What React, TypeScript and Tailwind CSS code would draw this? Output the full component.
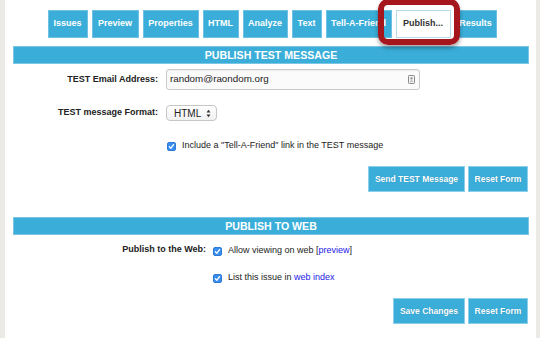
import React from 'react';

const tabs = [
  { label: 'Issues', w: 'w-[40px]' },
  { label: 'Preview', w: 'w-[47px]' },
  { label: 'Properties', w: 'w-[56px]' },
  { label: 'HTML', w: 'w-[36px]' },
  { label: 'Analyze', w: 'w-[45px]' },
  { label: 'Text', w: 'w-[30px]' },
  { label: 'Tell-A-Friend', w: 'w-[66px]' },
  { label: 'Publish...', w: 'w-[55px]', active: true },
  { label: 'Results', w: 'w-[42px]' },
];

function Check() {
  return (
    <span className="w-[9px] h-[9px] rounded-[2px] bg-[#3a8ef0] border border-[#2f7ad6] flex items-center justify-center shrink-0">
      <svg width="7" height="7" viewBox="0 0 7 7" fill="none">
        <path d="M1.4 3.7 L2.9 5.2 L5.6 1.6" stroke="white" strokeWidth="1.3" strokeLinecap="round" strokeLinejoin="round" />
      </svg>
    </span>
  );
}

function Button({ label, w }: { label: string; w: string }) {
  return (
    <button className={`${w} h-[26px] bg-[#3aaed9] border border-[#8ccfea] text-white font-bold text-[8.5px] flex items-center justify-center [text-shadow:0_0_1px_rgba(0,60,90,0.35)]`}>
      {label}
    </button>
  );
}

function SectionHeader({ title }: { title: string }) {
  return (
    <div className="h-[18px] bg-[#3aaed9] border border-[#7cc6e5] flex items-center justify-center text-white font-bold text-[10.6px] leading-none">
      {title}
    </div>
  );
}

export default function App() {
  return (
    <div className="w-[540px] h-[338px] bg-[#ebeae5] flex overflow-hidden font-['Liberation_Sans',Arial,sans-serif] text-[#222]">
      <div className="ml-[5px] w-[531px] h-full bg-white relative pl-[8px] pr-[7px]">
        {/* tab row */}
        <div className="pt-[10px] flex justify-center gap-[4px] pl-[2px]">
          {tabs.map((tab) => (
            <div
              key={tab.label}
              className={`${tab.w} h-[28px] flex items-center justify-center font-bold text-[9px] whitespace-nowrap overflow-hidden ${
                tab.active ? 'bg-white border border-[#b9dcec] text-[#333]' : 'bg-[#3aaed9] border border-[#6fc1e3] text-white'
              }`}
            >
              {tab.label}
            </div>
          ))}
        </div>

        {/* red highlight box */}
        <div className="absolute left-[373px] top-[-1px] w-[82px] h-[46px] rounded-[10px] border-[6px] border-[#a5161d] shadow-[0_3px_4px_rgba(0,0,0,0.35)]" />

        <div className="mt-[8px]">
          <SectionHeader title="PUBLISH TEST MESSAGE" />
        </div>

        <div className="grid grid-cols-[145px_1fr] gap-x-[8px] mt-[5px] text-[9px]">
          <div className="h-[21px] flex items-center justify-end font-bold">TEST Email Address:</div>
          <div className="w-[254px] h-[21px] border border-[#c9c9c9] rounded-[3px] bg-[#fbfbfb] shadow-[inset_0_1px_1px_rgba(0,0,0,0.06)] flex items-center pl-[3px] pr-[4px]">
            <span className="text-[9.8px] flex-1">random@raondom.org</span>
            <svg width="7" height="9" viewBox="0 0 7 9">
              <rect x="0.5" y="0.5" width="6" height="8" rx="0.8" fill="#f2f2f2" stroke="#8a8a8a" />
              <circle cx="3.5" cy="3.4" r="1.1" fill="#8a8a8a" />
              <path d="M1.8 6.6 Q3.5 4.6 5.2 6.6 Z" fill="#8a8a8a" />
            </svg>
          </div>

          <div className="mt-[15px] h-[16px] flex items-center justify-end font-bold">TEST message Format:</div>
          <div className="mt-[15px] w-[51px] h-[16px] border border-[#c6c6c6] rounded-[4px] bg-gradient-to-b from-white to-[#f1f1f1] flex items-center pl-[7px] pr-[5px] text-[10px]">
            <span className="flex-1">HTML</span>
            <svg width="5" height="9" viewBox="0 0 5 9">
              <path d="M0.5 3.5 L2.5 0.8 L4.5 3.5 Z" fill="#333" />
              <path d="M0.5 5.5 L2.5 8.2 L4.5 5.5 Z" fill="#333" />
            </svg>
          </div>

          <div className="col-start-2 mt-[19px] h-[12px] flex items-center gap-[6px] pl-[1px]">
            <Check />
            <span>Include a "Tell-A-Friend" link in the TEST message</span>
          </div>
        </div>

        <div className="mt-[14px] flex justify-end gap-[3px] pr-[1px]">
          <Button label="Send TEST Message" w="w-[97px]" />
          <Button label="Reset Form" w="w-[60px]" />
        </div>

        <div className="mt-[25px]">
          <SectionHeader title="PUBLISH TO WEB" />
        </div>

        <div className="grid grid-cols-[193px_1fr] gap-x-[7px] mt-[9px] text-[9px]">
          <div className="h-[12px] flex items-center justify-end font-bold">Publish to the Web:</div>
          <div className="h-[12px] flex items-center gap-[6px] translate-y-[1px]">
            <Check />
            <span>
              Allow viewing on web [<span className="text-[#2417e6]">preview</span>]
            </span>
          </div>

          <div className="col-start-2 mt-[16px] h-[12px] flex items-center gap-[6px]">
            <Check />
            <span>
              List this issue in <span className="text-[#2417e6]">web index</span>
            </span>
          </div>
        </div>

        <div className="mt-[14px] flex justify-end gap-[3px] pr-[1px]">
          <Button label="Save Changes" w="w-[72px]" />
          <Button label="Reset Form" w="w-[60px]" />
        </div>
      </div>
    </div>
  );
}
